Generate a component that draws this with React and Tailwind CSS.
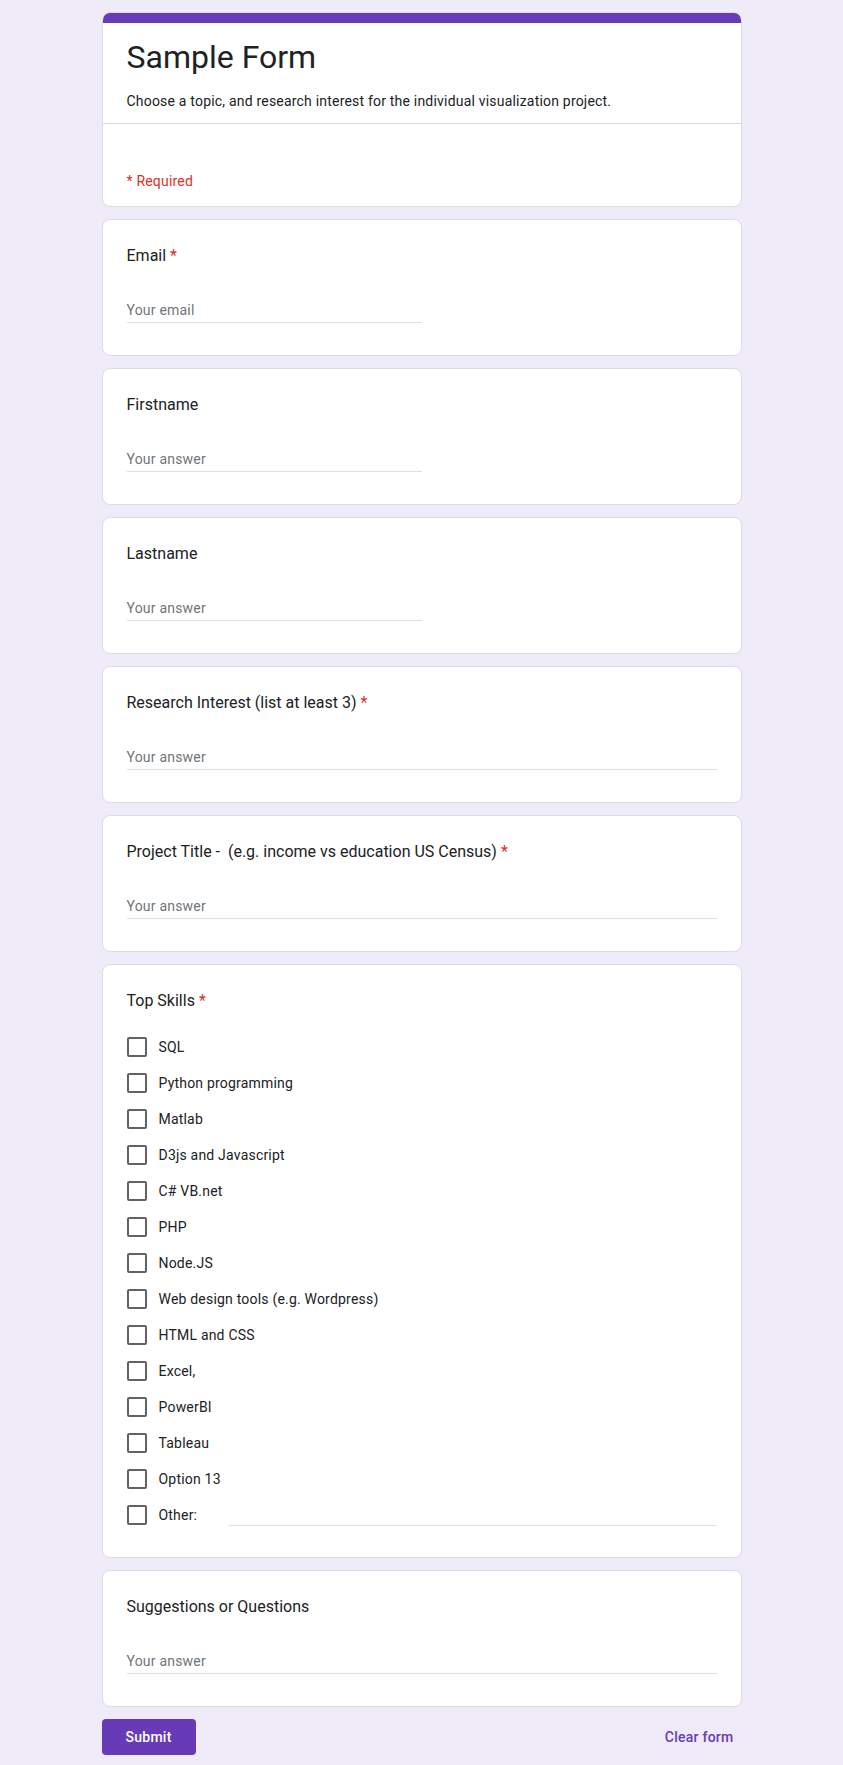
import React from "react";

const skills = [
  "SQL",
  "Python programming",
  "Matlab",
  "D3js and Javascript",
  "C# VB.net",
  "PHP",
  "Node.JS",
  "Web design tools (e.g. Wordpress)",
  "HTML and CSS",
  "Excel,",
  "PowerBI",
  "Tableau",
  "Option 13",
];

function Card({ children }) {
  return (
    <div className="bg-white rounded-lg border border-[#dadce0] px-6 pt-6 pb-6">
      {children}
    </div>
  );
}

function Label({ text, required }) {
  return (
    <div className="text-[16px] leading-6 text-[#202124] whitespace-pre-wrap">
      {text}
      {required && <span className="text-[#d93025] pl-1">*</span>}
    </div>
  );
}

function TextQuestion({ label, required, placeholder = "Your answer", half }) {
  return (
    <Card>
      <Label text={label} required={required} />
      <div
        className={
          "mt-[30px] mb-2 border-b border-[#e0e0e0] " + (half ? "w-1/2" : "w-full")
        }
      >
        <div className="text-[14px] leading-6 text-[#70757a] tracking-[0.2px]">
          {placeholder}
        </div>
      </div>
    </Card>
  );
}

function Box() {
  return (
    <span className="w-5 h-5 shrink-0 rounded-[2px] border-2 border-[#5f6368] bg-white" />
  );
}

export default function App() {
  return (
    <div
      className="min-h-screen bg-[#f0ebf8] pt-3 pb-[10px]"
      style={{ fontFamily: "Roboto, 'Liberation Sans', Arial, sans-serif" }}
    >
      <div className="w-[640px] mx-auto flex flex-col gap-3">
        {/* header card */}
        <div className="bg-white rounded-lg border border-[#dadce0] overflow-hidden">
          <div className="h-[10px] bg-[#673ab7]" />
          <div className="px-6 pt-[14px] pb-3 border-b border-[#dadce0]">
            <div className="text-[32px] leading-10 text-[#202124]">Sample Form</div>
            <div className="mt-[14px] text-[14px] leading-5 text-[#202124] tracking-[0.2px]">
              Choose a topic, and research interest for the individual visualization project.
            </div>
          </div>
          <div className="px-6 pt-[47px] pb-[15px] text-[14px] leading-5 text-[#d93025] tracking-[0.2px]">
            * Required
          </div>
        </div>

        <TextQuestion label="Email" required placeholder="Your email" half />
        <TextQuestion label="Firstname" half />
        <TextQuestion label="Lastname" half />
        <TextQuestion label="Research Interest (list at least 3)" required />
        <TextQuestion label="Project Title -  (e.g. income vs education US Census)" required />

        <Card>
          <Label text="Top Skills" required />
          <div className="mt-4 flex flex-col">
            {skills.map((s) => (
              <div key={s} className="h-9 flex items-center gap-3">
                <Box />
                <span className="text-[14px] text-[#202124] tracking-[0.2px]">{s}</span>
              </div>
            ))}
            <div className="h-9 flex items-center gap-3">
              <Box />
              <span className="text-[14px] text-[#202124] tracking-[0.2px]">Other:</span>
              <div className="flex-1 ml-5 h-[21px] border-b border-[#e0e0e0]" />
            </div>
          </div>
        </Card>

        <TextQuestion label="Suggestions or Questions" />

        <div className="flex items-center justify-between">
          <button className="h-9 px-6 rounded bg-[#673ab7] text-white text-[14px] font-medium tracking-[0.25px]">
            Submit
          </button>
          <button className="h-9 px-2 text-[#673ab7] text-[14px] font-medium tracking-[0.25px]">
            Clear form
          </button>
        </div>
      </div>
    </div>
  );
}
